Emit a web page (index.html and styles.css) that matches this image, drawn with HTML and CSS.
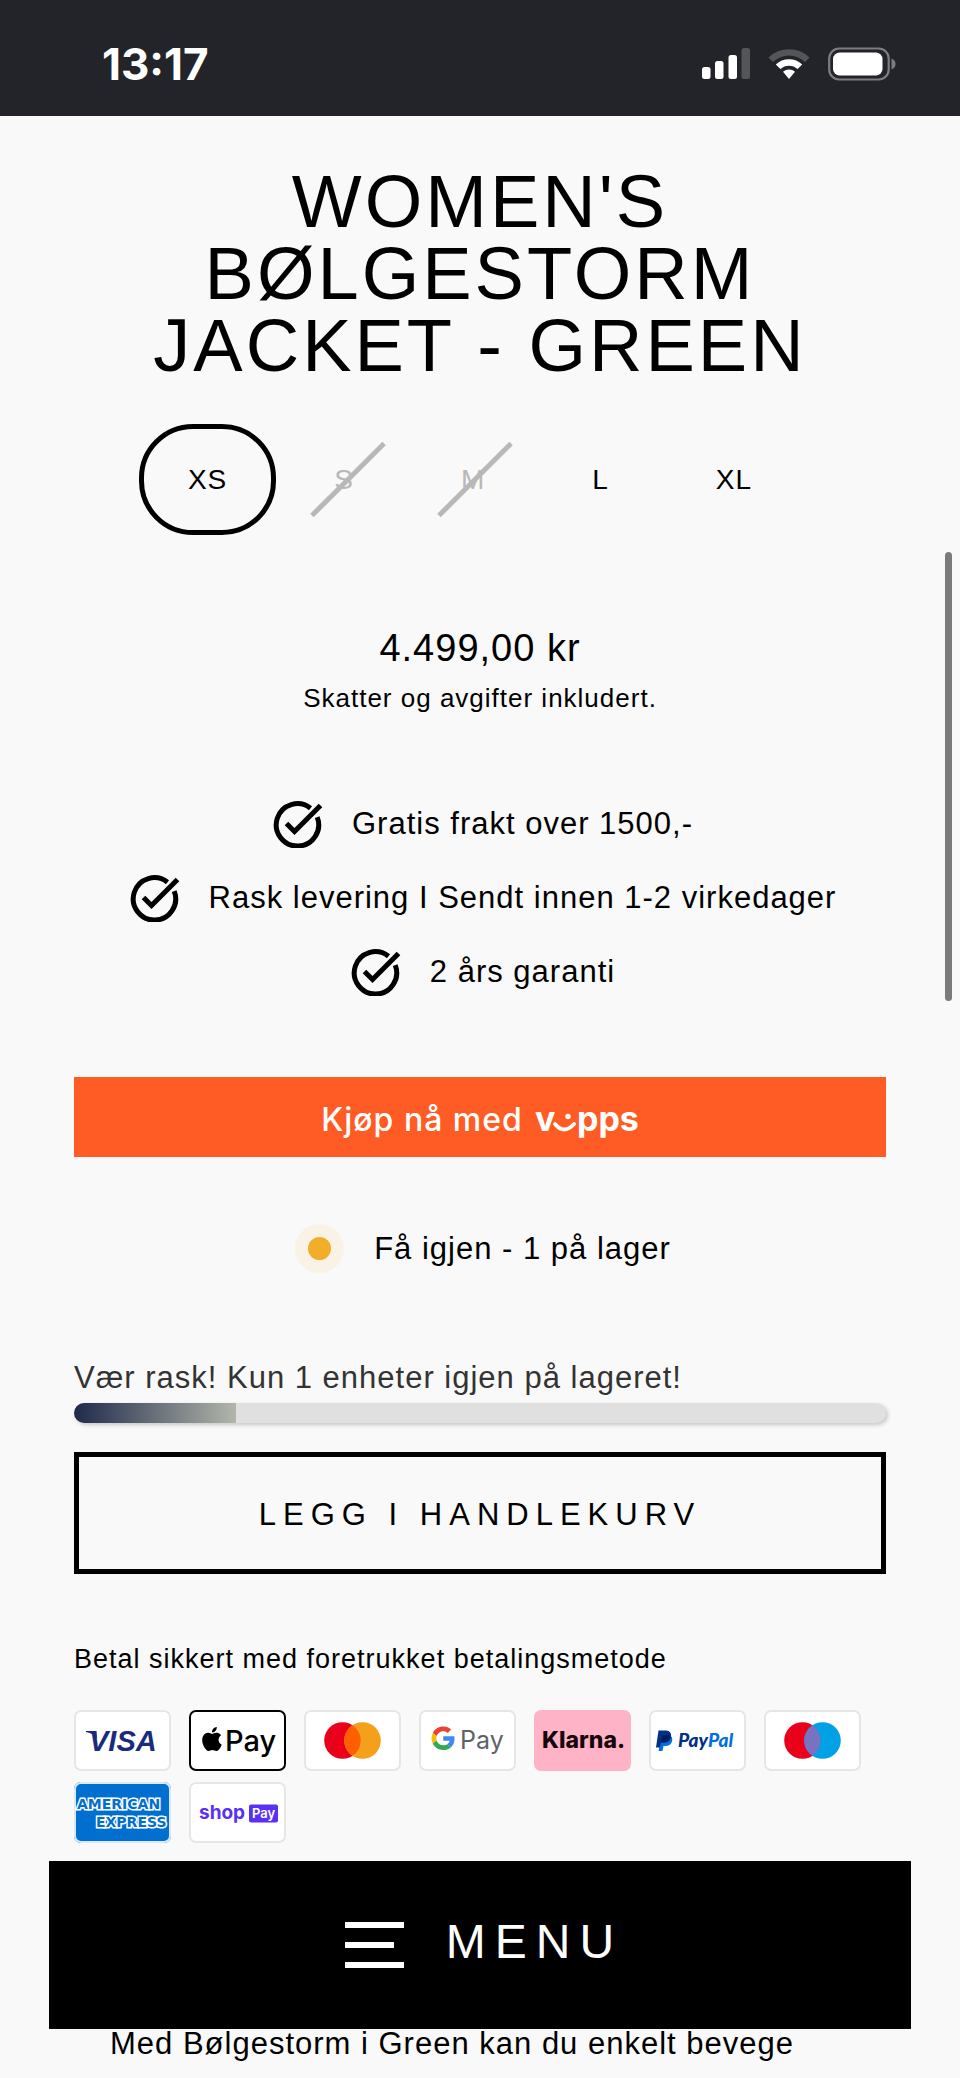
FILE: index.html
```html
<!DOCTYPE html>
<html lang="nb">
<head>
<meta charset="utf-8">
<meta name="viewport" content="width=device-width, initial-scale=1">
<title>Women's Bølgestorm Jacket - Green</title>
<link rel="stylesheet" href="styles.css">
</head>
<body>
<svg class="defs" aria-hidden="true">
  <symbol id="check" viewBox="0 0 50 48">
    <path d="M37.500 8.200A21.200 21.200 0 1 0 44.200 17.200" fill="none" stroke="currentColor" stroke-width="5"/>
    <path d="M13.500 23.500 21.500 31.500 47.500 5.500" fill="none" stroke="currentColor" stroke-width="5"/>
  </symbol>
</svg>

<header class="status">
  <time class="clock">13:17</time>
  <div class="status-icons">
    <svg width="48" height="32" viewBox="0 0 48 32" aria-label="Mobilsignal">
      <rect x="0" y="19" width="8.500" height="12" rx="2.500" fill="#fff"/>
      <rect x="13" y="13" width="8.500" height="18" rx="2.500" fill="#fff"/>
      <rect x="26.500" y="7" width="8.500" height="24" rx="2.500" fill="#fff"/>
      <rect x="39.500" y="0" width="8.500" height="31" rx="2.500" fill="#545559"/>
    </svg>
    <svg width="42" height="32" viewBox="0 0 42 32" aria-label="Wi-Fi">
      <path d="M0.500 9.500a29.500 29.500 0 0 1 41 0l-4.500 4.500a23 23 0 0 0-32 0z" fill="#545559"/>
      <path d="M7.800 16.500a19 19 0 0 1 26.400 0l-4.600 4.600a12.500 12.500 0 0 0-17.200 0z" fill="#fff"/>
      <path d="M15 23.700a9 9 0 0 1 12 0L21 31z" fill="#fff"/>
    </svg>
    <svg width="68" height="34" viewBox="0 0 68 34" aria-label="Batteri">
      <rect x="1.200" y="1.500" width="59.500" height="31" rx="10" fill="none" stroke="#7c7d81" stroke-width="2.200"/>
      <rect x="5" y="5.500" width="49.500" height="23" rx="6.500" fill="#fff"/>
      <path d="M63.500 11.500q4 1.500 4 5.500t-4 5.500z" fill="#7c7d81"/>
    </svg>
  </div>
</header>

<main class="product">
  <h1 class="title">WOMEN'S BØLGESTORM JACKET - GREEN</h1>

  <fieldset class="sizes" aria-label="Størrelse">
    <label class="size"><input type="radio" name="size" value="XS" checked><span>XS</span></label>
    <label class="size"><input type="radio" name="size" value="S" disabled><span>S</span></label>
    <label class="size"><input type="radio" name="size" value="M" disabled><span>M</span></label>
    <label class="size"><input type="radio" name="size" value="L"><span>L</span></label>
    <label class="size"><input type="radio" name="size" value="XL"><span>XL</span></label>
  </fieldset>

  <p class="price">4.499,00 kr</p>
  <p class="tax">Skatter og avgifter inkludert.</p>

  <ul class="perks">
    <li><svg class="check"><use href="#check"/></svg><span>Gratis frakt over 1500,-</span></li>
    <li><svg class="check"><use href="#check"/></svg><span>Rask levering I Sendt innen 1-2 virkedager</span></li>
    <li><svg class="check"><use href="#check"/></svg><span>2 års garanti</span></li>
  </ul>

  <button class="vipps" type="button">
    <span>Kjøp nå med</span>
    <svg width="104" height="52" viewBox="0 0 104 52" role="img" aria-label="vipps">
      <text class="vipps-mark" x="0" y="37">v</text>
      <path d="M20 30q9 11 19 0" fill="none" stroke="#fff" stroke-width="3.800" stroke-linecap="round"/>
      <circle cx="33" cy="22.500" r="2.700" fill="#fff"/>
      <text class="vipps-mark" x="42" y="37">pps</text>
    </svg>
  </button>

  <p class="stock"><span class="stock-dot"></span><span>Få igjen - 1 på lager</span></p>

  <p class="urgency" id="urgency">Vær rask! Kun 1 enheter igjen på lageret!</p>
  <div class="meter" role="progressbar" aria-labelledby="urgency" aria-valuenow="20" aria-valuemin="0" aria-valuemax="100">
    <div class="meter-fill" style="width:20%"></div>
  </div>

  <button class="add" type="button">LEGG I HANDLEKURV</button>

  <p class="pay-title">Betal sikkert med foretrukket betalingsmetode</p>
  <ul class="cards">
    <li class="card">
      <svg viewBox="0 0 97 61" role="img" aria-label="Visa">
        <path d="M12 21h10.500l.5 8q-3-5.500-11-7z" fill="#1a2a80"/>
        <text class="logo-visa" x="15" y="41">VISA</text>
      </svg>
    </li>
    <li class="card card-apple">
      <svg viewBox="0 0 97 61" role="img" aria-label="Apple Pay">
        <path transform="translate(11 17)" d="M12.152 6.896c-.948 0-2.415-1.078-3.960-1.040-2.040.027-3.910 1.183-4.961 3.014-2.117 3.675-.546 9.103 1.519 12.090 1.013 1.454 2.208 3.090 3.792 3.039 1.520-.065 2.090-.987 3.935-.987 1.831 0 2.350.987 3.960.948 1.637-.026 2.676-1.480 3.676-2.948 1.156-1.688 1.636-3.325 1.662-3.415-.039-.013-3.182-1.221-3.220-4.857-.026-3.040 2.480-4.494 2.597-4.559-1.429-2.090-3.623-2.324-4.390-2.376-2-.156-3.675 1.090-4.610 1.090zM15.530 3.830c.843-1.012 1.400-2.427 1.245-3.830-1.207.052-2.662.805-3.532 1.818-.780.896-1.454 2.338-1.273 3.714 1.338.104 2.715-.688 3.559-1.701"/>
        <text class="logo-apple" x="36" y="41">Pay</text>
      </svg>
    </li>
    <li class="card">
      <svg viewBox="0 0 97 61" role="img" aria-label="Mastercard">
        <circle cx="38.500" cy="30.500" r="18.300" fill="#eb001b"/>
        <circle cx="58.500" cy="30.500" r="18.300" fill="#f5a01b"/>
        <path d="M48.500 15.200a18.300 18.300 0 0 1 0 30.600a18.300 18.300 0 0 1 0-30.600z" fill="#ff5f00"/>
      </svg>
    </li>
    <li class="card">
      <svg viewBox="0 0 97 61" role="img" aria-label="Google Pay">
        <g transform="translate(12.500 16.500) scale(.49)">
          <path fill="#ea4335" d="M24 9.500c3.540 0 6.710 1.220 9.210 3.600l6.850-6.850C35.900 2.380 30.470 0 24 0 14.620 0 6.510 5.380 2.560 13.220l7.980 6.190C12.430 13.720 17.740 9.500 24 9.500z"/>
          <path fill="#4285f4" d="M46.980 24.550c0-1.570-.150-3.090-.380-4.550H24v9.020h12.940c-.580 2.960-2.260 5.480-4.780 7.180l7.730 6c4.510-4.180 7.090-10.360 7.090-17.650z"/>
          <path fill="#fbbc05" d="M10.530 28.590c-.480-1.450-.760-2.990-.760-4.590s.270-3.140.760-4.590l-7.980-6.190C.920 16.460 0 20.120 0 24c0 3.880.920 7.540 2.560 10.780l7.970-6.190z"/>
          <path fill="#34a853" d="M24 48c6.480 0 11.930-2.130 15.890-5.810l-7.730-6c-2.150 1.450-4.920 2.300-8.160 2.300-6.260 0-11.570-4.220-13.470-9.910l-7.980 6.190C6.510 42.620 14.620 48 24 48z"/>
        </g>
        <text class="logo-google" x="41" y="39">Pay</text>
      </svg>
    </li>
    <li class="card card-klarna">
      <svg viewBox="0 0 97 61" role="img" aria-label="Klarna">
        <text class="logo-klarna" x="8" y="38">Klarna.</text>
      </svg>
    </li>
    <li class="card">
      <svg viewBox="0 0 97 61" role="img" aria-label="PayPal">
        <path d="M13 25h6.500q5 1 3.500 6.500-1.500 4.500-7 4.500h-1.500l-1 5H9.500z" fill="#0070e0"/>
        <path d="M9.500 20.500h7.500q6 .5 5 6.500-1.200 5.500-7.500 5.500h-2.500l-1 5H7z" fill="#003087"/>
        <path d="M13.500 25h6q2 .5 2.300 2.500-1.300 5-7.300 5h-2.500z" fill="#001c64"/>
        <text class="logo-paypal" x="29" y="37"><tspan fill="#003087">Pay</tspan><tspan fill="#0070e0">Pal</tspan></text>
      </svg>
    </li>
    <li class="card">
      <svg viewBox="0 0 97 61" role="img" aria-label="Maestro">
        <circle cx="38.500" cy="30.500" r="18.300" fill="#eb001b"/>
        <circle cx="58.500" cy="30.500" r="18.300" fill="#00a2e5"/>
        <path d="M48.500 15.200a18.300 18.300 0 0 1 0 30.600a18.300 18.300 0 0 1 0-30.600z" fill="#7673c0"/>
      </svg>
    </li>
    <li class="card card-amex">
      <svg viewBox="0 0 97 61" role="img" aria-label="American Express">
        <text class="logo-amex" x="3" y="27">AMERICAN</text>
        <text class="logo-amex" x="22" y="45">EXPRESS</text>
      </svg>
    </li>
    <li class="card">
      <svg viewBox="0 0 97 61" role="img" aria-label="Shop Pay">
        <text class="logo-shop" x="10" y="37">shop</text>
        <rect x="60" y="22.500" width="29" height="18" rx="2" fill="#5a31f4"/>
        <text class="logo-shop-pay" x="63" y="36">Pay</text>
      </svg>
    </li>
  </ul>

  <p class="description">Med Bølgestorm i Green kan du enkelt bevege</p>
</main>

<button class="menu" type="button">
  <svg width="59" height="46" viewBox="0 0 59 46" aria-hidden="true">
    <path d="M0 3h59M0 23h49M0 43h59" stroke="#fff" stroke-width="6"/>
  </svg>
  <span class="menu-text">MENU</span>
</button>
<div class="scrollbar"></div>
</body>
</html>
```
FILE: styles.css
```css
* {
  box-sizing: border-box;
}

body {
  margin: 0;
  background: #f9f9f9;
  color: #000;
  font-family: "Liberation Sans", Arial, sans-serif;
  font-size: 31px;
  line-height: 40px;
  letter-spacing: 1px;
}

h1, p, ul, fieldset {
  margin: 0;
  padding: 0;
  border: 0;
}

ul {
  list-style: none;
}

button {
  font: inherit;
  color: inherit;
  border-radius: 0;
}

svg {
  display: block;
}

.defs {
  width: 0;
  height: 0;
  position: absolute;
}

/* Status bar */
.status {
  display: flex;
  align-items: center;
  justify-content: space-between;
  height: 116px;
  padding: 12px 64px 0 102px;
  background: #232429;
  color: #fff;
}

.clock {
  font: 700 44px/48px Inter, sans-serif;
  letter-spacing: 0;
}

.status-icons {
  display: flex;
  align-items: center;
  gap: 18px;
}

/* Product */
.product {
  padding: 50px 74px 0;
}

.title {
  font-size: 74px;
  font-weight: 400;
  line-height: 72px;
  letter-spacing: 3px;
  text-align: center;
}

.sizes {
  display: flex;
  justify-content: center;
  gap: 9px;
  margin-top: 42px;
  padding-right: 20px;
  font-size: 28px;
}

.size {
  position: relative;
  display: grid;
  place-items: center;
  height: 111px;
  padding: 0 44px;
  border: 5px solid transparent;
  border-radius: 54px;
}

.size input {
  position: absolute;
  inset: 0;
  margin: 0;
  width: 100%;
  height: 100%;
  opacity: 0;
}

.size:has(:checked) {
  border-color: #000;
}

.size:has(:disabled) {
  color: #b8b8b8;
}

.size:has(:disabled)::after {
  content: "";
  position: absolute;
  left: 7px;
  width: 102px;
  height: 5px;
  background: #b8b8b8;
  rotate: -45deg;
}

.price {
  margin-top: 91px;
  font-size: 38px;
  line-height: 44px;
  text-align: center;
}

.tax {
  margin-top: 10px;
  font-size: 26px;
  line-height: 36px;
  text-align: center;
}

.perks {
  display: grid;
  gap: 26px;
  margin-top: 84px;
}

.perks li {
  display: flex;
  justify-content: center;
  gap: 29px;
  padding-left: 6px;
  line-height: 48px;
}

.check {
  width: 50px;
  height: 48px;
}

.vipps {
  display: flex;
  align-items: center;
  justify-content: center;
  gap: 12px;
  width: 100%;
  height: 80px;
  margin-top: 81px;
  padding: 6px 0 0;
  border: 0;
  background: #ff5b24;
  color: #fff;
  font: 500 32px/40px Inter, sans-serif;
  letter-spacing: 1px;
}

.vipps-mark {
  font: 700 34px Inter, sans-serif;
  letter-spacing: 0;
  fill: #fff;
}

.stock {
  display: flex;
  align-items: center;
  justify-content: center;
  gap: 30px;
  margin-top: 67px;
  padding-left: 6px;
}

.stock-dot {
  width: 49px;
  height: 49px;
  border: 13px solid #faf3e5;
  border-radius: 50%;
  background: #f0ae2b;
}

.urgency {
  margin-top: 85px;
  color: #333;
}

.meter {
  height: 20px;
  margin-top: 5px;
  overflow: hidden;
  border-radius: 10px;
  background: #e0e0e0;
  box-shadow: 2px 2px 4px rgba(0, 0, 0, 0.2);
}

.meter-fill {
  height: 100%;
  background: linear-gradient(90deg, #1f2a4a, #b2b6aa);
}

.add {
  width: 100%;
  height: 122px;
  margin-top: 29px;
  padding: 3px 0 0;
  border: 5px solid #000;
  background: transparent;
  letter-spacing: 7px;
}

.pay-title {
  margin-top: 67px;
  font-size: 27px;
  line-height: 36px;
}

/* Payment cards */
.cards {
  display: flex;
  flex-wrap: wrap;
  gap: 11px 18px;
  margin-top: 33px;
  letter-spacing: 0;
}

.card {
  width: 97px;
  height: 61px;
  overflow: hidden;
  border-radius: 7px;
  background: #fff;
  box-shadow: inset 0 0 0 2px #e6e6e6;
}

.card-apple {
  box-shadow: inset 0 0 0 2px #000;
}

.card-klarna {
  background: #ffb3c7;
  box-shadow: none;
}

.card-amex {
  background: #016fd0;
  box-shadow: inset 0 0 0 2px #d5ebfb;
}

.logo-visa {
  font: italic 700 29px "Liberation Sans", sans-serif;
  fill: #1a2a80;
}

.logo-apple {
  font: 500 29px Inter, sans-serif;
}

.logo-google {
  font: 400 25px Inter, sans-serif;
  fill: #5f6368;
}

.logo-klarna {
  font: 800 23px Inter, sans-serif;
  fill: #17070d;
}

.logo-paypal {
  font: italic 900 19px Lato, sans-serif;
}

.logo-amex {
  font: 700 14px "DejaVu Sans", sans-serif;
  fill: #016fd0;
  stroke: #fff;
  stroke-width: 3px;
  paint-order: stroke;
}

.logo-shop {
  font: 700 19px Inter, sans-serif;
  fill: #5a31f4;
}

.logo-shop-pay {
  font: 600 13px Inter, sans-serif;
  fill: #fff;
}

.description {
  margin-top: 181px;
  padding: 0 36px;
}

/* Floating menu bar */
.menu {
  position: fixed;
  right: 49px;
  bottom: 49px;
  left: 49px;
  display: flex;
  align-items: center;
  justify-content: center;
  gap: 42px;
  height: 168px;
  padding: 0 0 0 8px;
  border: 0;
  background: #000;
  color: #fff;
  font-size: 48px;
  line-height: 56px;
  letter-spacing: 9px;
}

.menu-text {
  padding-bottom: 6px;
}

.scrollbar {
  position: fixed;
  top: 552px;
  right: 8px;
  width: 7px;
  height: 449px;
  border-radius: 4px;
  background: #7b7b7b;
}
```
